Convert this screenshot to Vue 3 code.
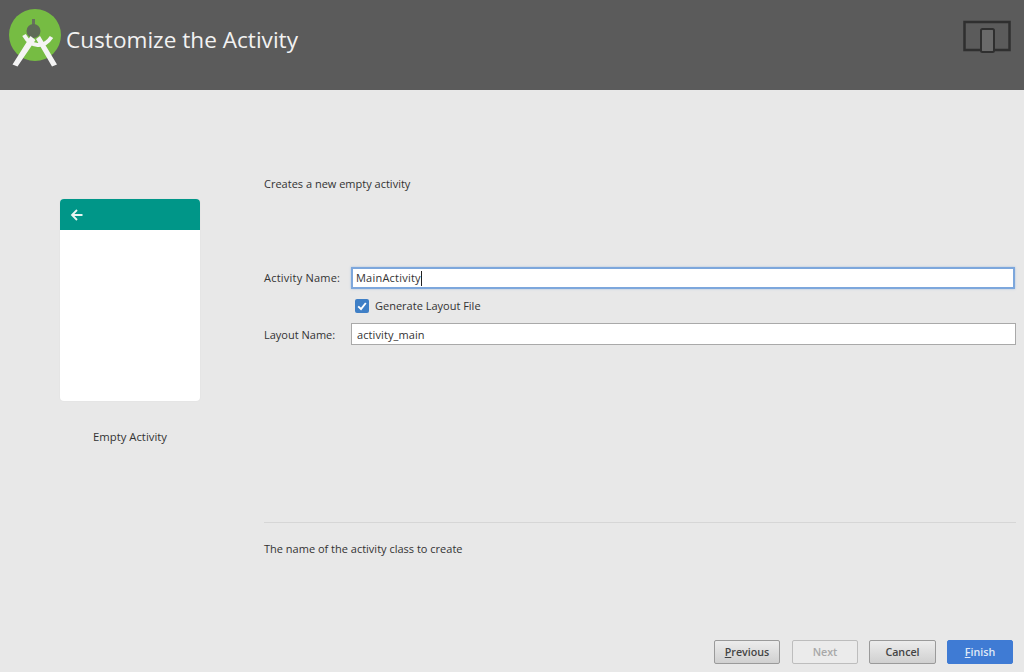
<script setup>
const buttons = [
  { key: 'P', rest: 'revious', cls: 'btn prev' },
  { key: '', rest: 'Next', cls: 'btn off' },
  { key: '', rest: 'Cancel', cls: 'btn wide' },
  { key: 'F', rest: 'inish', cls: 'btn primary' }
]
</script>

<template>
  <div class="page">
    <header class="head">
      <svg class="logo" viewBox="0 0 60 60" width="60" height="60" aria-hidden="true">
        <circle cx="27" cy="27" r="26" fill="#76bc43" />
        <path d="M25.500 11v8" stroke="#66705e" stroke-width="3" />
        <circle cx="25.500" cy="23" r="7" fill="#5f6b58" />
        <path d="M22.500 28 4.500 56.500l5 2L27.500 32zM28 31l16 27.500 5-2L32 28z" fill="#f4f4f4" />
        <path d="M16 27c7 12.500 20 13.500 27.500 2" stroke="#f4f4f4" stroke-width="4" fill="none" />
      </svg>
      <h1 class="title">Customize the Activity</h1>
      <svg class="device" viewBox="0 0 50 36" width="50" height="36" aria-hidden="true">
        <rect x="2.500" y="3" width="45" height="28" fill="none" stroke="#2f2f2f" stroke-width="2.500" />
        <rect x="19" y="10" width="13" height="23" rx="1.500" fill="#6a6a6a" stroke="#2f2f2f" stroke-width="2" />
      </svg>
    </header>

    <main class="body">
      <aside class="preview">
        <div class="card">
          <div class="bar">
            <svg viewBox="0 0 14 14" width="14" height="14" aria-hidden="true">
              <path d="M12.500 7H2M7 2 2 7l5 5" stroke="#e8f5f2" stroke-width="1.800" fill="none" />
            </svg>
          </div>
        </div>
        <p class="caption">Empty Activity</p>
      </aside>

      <section class="form">
        <p class="intro">Creates a new empty activity</p>
        <div class="fields">
          <label class="label wider">Activity Name:</label>
          <div class="input focused"><span class="wider">MainActivity</span><span class="caret"></span></div>
          <span></span>
          <label class="check">
            <span class="box">
              <svg viewBox="0 0 14 14" width="14" height="14" aria-hidden="true">
                <path d="M3.200 7.400 6 10l4.800-6" stroke="#fff" stroke-width="1.900" fill="none" />
              </svg>
            </span>
            Generate Layout File
          </label>
          <label class="label low">Layout Name:</label>
          <div class="input"><span class="low wider-slight">activity_main</span></div>
        </div>
        <hr class="rule" />
        <p class="help">The name of the activity class to create</p>
        <footer class="actions">
          <button v-for="b in buttons" :key="b.rest" :class="b.cls" type="button"><u v-if="b.key">{{ b.key }}</u>{{ b.rest }}</button>
        </footer>
      </section>
    </main>
  </div>
</template>

<style>
html, body { margin: 0; background: #e8e8e8; }
</style>

<style scoped>
.page {
  width: 1024px;
  height: 672px;
  overflow: hidden;
  background: #e8e8e8;
  font-family: "Open Sans", "Noto Sans", sans-serif;
  font-size: 11px;
  color: #333;
}
.head {
  height: 90px;
  box-sizing: border-box;
  background: #5b5b5b;
  display: flex;
  align-items: flex-start;
  padding: 8px 12px 0 8px;
}
.logo { flex: none; }
.title {
  margin: 16px 0 0 -2px;
  font-size: 22.6px;
  line-height: 32px;
  font-weight: 400;
  color: #f2f2f2;
  flex: 1;
}
.device { margin-top: 11px; flex: none; }
.body {
  height: 582px;
  display: grid;
  grid-template-columns: 264px 1fr;
}
.preview { padding: 109px 0 0 60px; }
.card {
  width: 140px;
  height: 202px;
  border-radius: 4px;
  background: #fff;
  overflow: hidden;
  box-shadow: 0 0 2px rgba(0, 0, 0, 0.05);
}
.bar {
  height: 31px;
  background: #009688;
  display: flex;
  align-items: center;
  padding-left: 10px;
}
.caption {
  width: 140px;
  margin: 28px 0 0;
  line-height: 16px;
  text-align: center;
  font-size: 11.3px;
}
.form {
  display: flex;
  flex-direction: column;
  padding: 86px 8px 0 0;
}
.intro { margin: 0; line-height: 16px; }
.fields {
  margin-top: 75px;
  display: grid;
  grid-template-columns: 87px 1fr;
  grid-auto-rows: 22px;
  row-gap: 6px;
  align-items: center;
}
.label { line-height: 16px; }
.wider { letter-spacing: 0.22px; }
.wider-slight { letter-spacing: 0.1px; margin-left: 1px; }
.low { padding-top: 1px; }
.input {
  height: 22px;
  box-sizing: border-box;
  border: 1px solid #a9a9a9;
  background: #fff;
  padding: 0 4px;
  line-height: 20px;
  color: #333;
  display: flex;
  align-items: center;
}
.focused {
  margin-right: 1px;
  border: 2px solid #7da7dc;
  padding: 0 3px;
  line-height: 18px;
  box-shadow: 0 0 2px rgba(125, 167, 220, 0.6);
}
.caret {
  width: 1px;
  height: 15px;
  background: #222;
}
.check {
  display: flex;
  align-items: center;
  gap: 6px;
  padding-left: 4px;
  line-height: 16px;
}
.box {
  width: 14px;
  height: 14px;
  border-radius: 2px;
  background: #3f7fc6;
  display: block;
}
.box svg { display: block; }
.rule {
  margin: 177px 0 0;
  border: 0;
  height: 1px;
  background: #d6d6d6;
}
.help { margin: 18px 0 0; line-height: 16px; }
.actions {
  margin-top: 83px;
  display: flex;
  justify-content: flex-end;
  gap: 11px;
  padding-right: 3px;
}
.btn {
  width: 66px;
  height: 24px;
  box-sizing: border-box;
  border: 1px solid #9a9a9a;
  border-radius: 2px;
  background: linear-gradient(#ececec, #d0d0d0);
  font: 600 10.7px "Open Sans", "Noto Sans", sans-serif;
  color: #444;
  padding: 0;
}
.prev { margin-right: 1px; }
.wide { width: 67px; }
.off {
  background: #ebebeb;
  border-color: #bdbdbd;
  color: #a8a8a8;
}
.primary {
  background: #3f7bd4;
  border-color: #3f7bd4;
  color: #dfe9f7;
}
</style>
